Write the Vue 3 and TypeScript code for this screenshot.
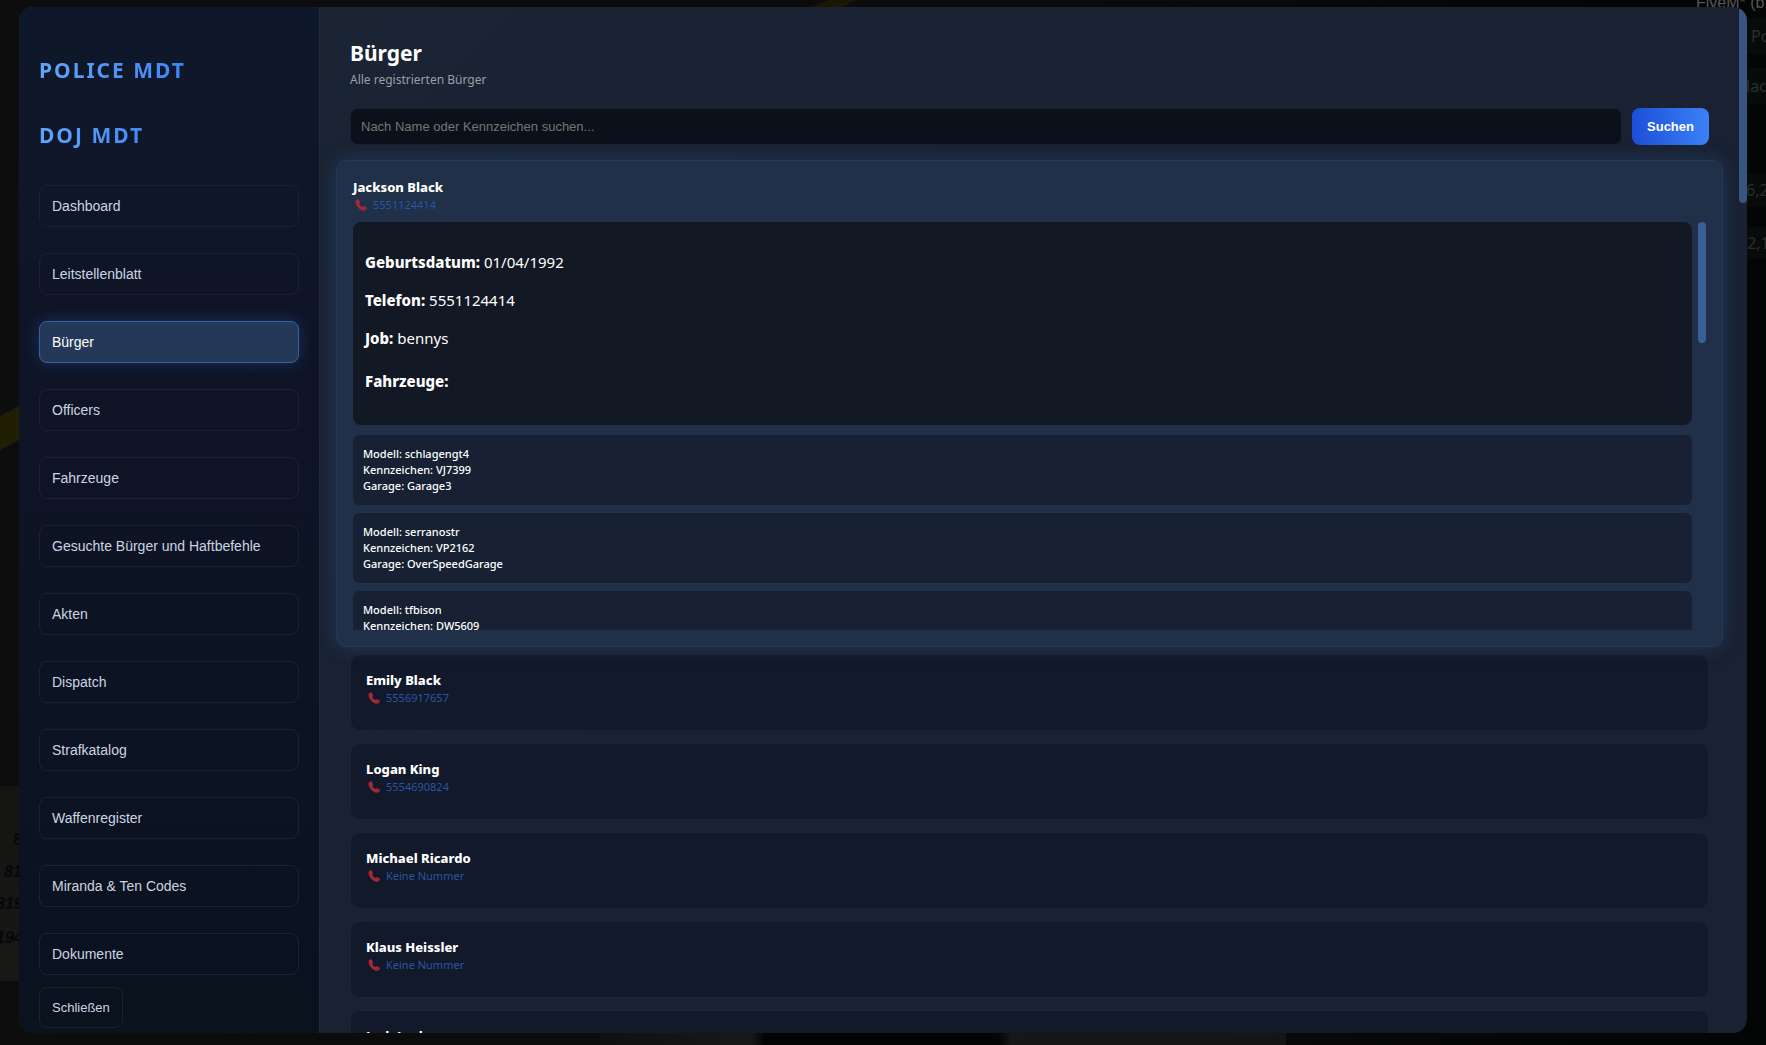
<script setup lang="ts">
import { ref } from 'vue'

interface Vehicle {
  model: string
  plate: string
  garage: string
}

interface Citizen {
  name: string
  phone: string
}

const navItems: string[] = [
  'Dashboard',
  'Leitstellenblatt',
  'Bürger',
  'Officers',
  'Fahrzeuge',
  'Gesuchte Bürger und Haftbefehle',
  'Akten',
  'Dispatch',
  'Strafkatalog',
  'Waffenregister',
  'Miranda & Ten Codes',
  'Dokumente',
]

const current = ref('Bürger')
const query = ref('')

const vehicles: Vehicle[] = [
  { model: 'schlagengt4', plate: 'VJ7399', garage: 'Garage3' },
  { model: 'serranostr', plate: 'VP2162', garage: 'OverSpeedGarage' },
  { model: 'tfbison', plate: 'DW5609', garage: 'Garage3' },
]

const citizens: Citizen[] = [
  { name: 'Emily Black', phone: '5556917657' },
  { name: 'Logan King', phone: '5554690824' },
  { name: 'Michael Ricardo', phone: 'Keine Nummer' },
  { name: 'Klaus Heissler', phone: 'Keine Nummer' },
  { name: 'Jack Leslor', phone: 'Keine Nummer' },
]

const handset =
  'M1.2 1.1C2.2 0 3.3 0 3.9 1L4.9 2.9C5.2 3.6 5 4.2 4.2 4.8C4.7 6.400 5.900 7.500 7.400 8C8 7.200 8.600 7 9.300 7.300L11.300 8.300C12.300 8.900 12.200 9.900 11.100 11C9.600 12.400 6.300 11.700 3.500 8.900C.6 6-.2 2.600 1.200 1.100Z'
</script>

<template>
  <div class="page">
    <svg width="0" height="0" class="defs" aria-hidden="true">
      <linearGradient id="handset-fill" x1="0" x2="1">
        <stop offset="0" stop-color="#a8263a" />
        <stop offset="0.6" stop-color="#a62a30" />
        <stop offset="1" stop-color="#8c2350" />
      </linearGradient>
    </svg>
    <div class="world" aria-hidden="true">
      <svg class="stripe-left" viewBox="0 0 19 44"><path d="M0 10 19 0V34L0 44Z" fill="#211f03" /></svg>
      <svg class="stripe-top" viewBox="0 0 44 7"><path d="M16 0H44L30 7H0Z" fill="#1a1804" /></svg>
      <div class="notes">
        <span class="n1">8</span>
        <span class="n2">81</span>
        <span class="n3">819</span>
        <span class="n4">194</span>
      </div>
      <div class="floor"></div>
      <div class="hud">
        <span class="hud-title">FiveM* (b</span>
        <span class="hud-row r1">Po</span>
        <span class="hud-row r2">lac</span>
        <span class="hud-row r3">6,2</span>
        <span class="hud-row r4">32,1</span>
      </div>
    </div>

    <div class="panel">
      <aside class="sidebar">
        <h2 class="brand">POLICE MDT</h2>
        <h2 class="brand">DOJ MDT</h2>
        <nav class="nav">
          <button
            v-for="item in navItems"
            :key="item"
            type="button"
            class="nav-btn"
            :class="{ active: item === current }"
            @click="current = item"
          >
            {{ item }}
          </button>
        </nav>
        <button type="button" class="nav-btn close">Schließen</button>
      </aside>

      <main class="main">
        <h1>Bürger</h1>
        <p class="subtitle">Alle registrierten Bürger</p>

        <form class="search" @submit.prevent>
          <input v-model="query" type="text" aria-label="Suche" placeholder="Nach Name oder Kennzeichen suchen..." />
          <button type="submit">Suchen</button>
        </form>

        <article class="card open">
          <h3>Jackson Black</h3>
          <p class="phone">
            <svg viewBox="0 0 12 12"><path :d="handset" /></svg>
            5551124414
          </p>
          <div class="details">
            <div class="details-body">
              <section class="facts">
                <p><strong>Geburtsdatum:</strong> 01/04/1992</p>
                <p><strong>Telefon:</strong> 5551124414</p>
                <p><strong>Job:</strong> bennys</p>
                <h4>Fahrzeuge:</h4>
              </section>
              <section v-for="v in vehicles" :key="v.plate" class="vehicle">
                Modell: {{ v.model }}<br />
                Kennzeichen: {{ v.plate }}<br />
                Garage: {{ v.garage }}
              </section>
            </div>
            <div class="thumb"></div>
          </div>
        </article>

        <article v-for="c in citizens" :key="c.name" class="card">
          <h3>{{ c.name }}</h3>
          <p class="phone">
            <svg viewBox="0 0 12 12"><path :d="handset" /></svg>
            {{ c.phone }}
          </p>
        </article>
      </main>
      <div class="page-thumb"></div>
    </div>
  </div>
</template>

<style>
body {
  background: #060707;
}
</style>

<style scoped>
* {
  box-sizing: border-box;
}

h1,
h2,
h3,
h4,
p {
  margin: 0;
}

.page {
  position: relative;
  height: 100vh;
  padding: 7px 19px 12px;
  overflow: hidden;
  background: linear-gradient(90deg, #0c0d0c, #0b0b0b 60%, #040605 90%);
  color: #fff;
  font-family: 'Noto Sans', 'Open Sans', sans-serif;
}

.defs {
  position: absolute;
}

/* darkened game scene around the tablet */
.world > * {
  position: absolute;
}

.stripe-left {
  left: 0;
  top: 406px;
  width: 19px;
  height: 44px;
}

.stripe-top {
  left: 812px;
  top: 0;
  width: 44px;
  height: 7px;
}

.notes {
  left: 0;
  top: 786px;
  width: 19px;
  height: 195px;
  overflow: hidden;
  background: linear-gradient(#141413, #181817);
  color: #070707;
  font: italic bold 16px/20px 'Liberation Sans', sans-serif;
}

.notes span {
  position: absolute;
}

.n1 {
  left: 13px;
  top: 44px;
}

.n2 {
  left: 4px;
  top: 76px;
}

.n3 {
  left: -4px;
  top: 108px;
}

.n4 {
  left: -4px;
  top: 142px;
}

.floor {
  left: 600px;
  right: 480px;
  bottom: 0;
  height: 12px;
  background: linear-gradient(90deg, #111010, #191919 22%, #040404 24%, #040404 58%, #171717 60%, #161515);
}

.hud {
  right: 0;
  top: 0;
  width: 70px;
  height: 262px;
  overflow: hidden;
  color: #2b2d2c;
  font: 16px/20px 'Noto Sans', sans-serif;
}

.hud-title {
  position: absolute;
  left: 0;
  top: -7px;
  color: #555;
  white-space: nowrap;
  font-family: 'Liberation Sans', sans-serif;
  font-size: 16px;
}

.hud-row {
  position: absolute;
  left: 30px;
  right: 0;
  padding: 8px 0 8px 20px;
  background: #070c0b;
}

.r1 {
  top: 18px;
  padding-left: 25px;
}

.r2 {
  top: 68px;
}

.r3 {
  top: 174px;
  padding-top: 6px;
  padding-bottom: 6px;
}

.r4 {
  top: 227px;
  padding: 6px 0 6px 12px;
}

.panel {
  position: relative;
  display: flex;
  height: 100%;
  overflow: hidden;
  border-radius: 14px;
  background: linear-gradient(135deg, #1b2534, #192132 50%, #192132);
}

.sidebar {
  flex: none;
  display: flex;
  flex-direction: column;
  width: 301px;
  padding: 46px 20px 0;
  border-right: 1px solid #1b2a42;
  background: linear-gradient(#0f182a, #0f1527 30%, #0b1220 85%, #0a121e);
}

.brand {
  align-self: flex-start;
  margin-bottom: 30px;
  padding-right: 60px;
  background: linear-gradient(90deg, #60a5fa, #3b82f6 80%);
  background-clip: text;
  color: transparent;
  font-size: 21px;
  font-weight: 700;
  line-height: 35px;
  letter-spacing: 2px;
}

.nav {
  display: flex;
  flex-direction: column;
  gap: 26px;
  margin-top: 2px;
}

.nav-btn {
  height: 42px;
  padding: 0 12px;
  border: 1px solid #1a2131;
  border-radius: 8px;
  background: transparent;
  color: #cbd5e1;
  font: 14px 'Liberation Sans', Arial, sans-serif;
  text-align: left;
}

.nav-btn.active {
  border-color: #3563a0;
  background: #243959;
  box-shadow: 0 0 15px rgba(59, 130, 246, 0.25);
  color: #fff;
}

.close {
  flex: none;
  align-self: flex-start;
  height: 41px;
  margin-top: 12px;
  font-size: 13px;
}

.main {
  flex: 1;
  min-width: 0;
  padding: 30px 30px 0;
  overflow: hidden;
}

h1 {
  font-size: 21px;
  font-weight: 700;
  line-height: 32px;
}

.subtitle {
  color: #9a9fa8;
  font-size: 12px;
  line-height: 22px;
}

.search {
  display: flex;
  align-items: center;
  gap: 10px;
  margin: 17px 0 15px;
}

.search input {
  flex: 1;
  min-width: 0;
  height: 37px;
  padding: 0 10px;
  border: 1px solid #19202f;
  border-radius: 8px;
  background: #0b111b;
  color: #fff;
  font: 13px 'Liberation Sans', Arial, sans-serif;
}

.search input::placeholder {
  color: #757575;
}

.search button {
  width: 77px;
  height: 37px;
  padding: 0;
  border: 0;
  border-radius: 8px;
  background: linear-gradient(90deg, #1d4ed8, #3b82f6);
  color: #fff;
  font: bold 13px 'Liberation Sans', Arial, sans-serif;
}

.card {
  height: 77px;
  margin-bottom: 12px;
  padding: 16px 15px;
  border: 1px solid #1b2435;
  border-radius: 10px;
  background: #11192a;
}

.card h3 {
  font-size: 13px;
  font-weight: 800;
  line-height: 18px;
}

.phone {
  display: flex;
  align-items: center;
  gap: 6px;
  padding-left: 2px;
  color: #2a56a3;
  font-size: 11px;
  line-height: 17px;
}

.phone svg {
  width: 12px;
  height: 12px;
  fill: url(#handset-fill);
}

.card.open {
  position: relative;
  height: 487px;
  margin: 0 -14px 7px;
  padding: 17px 15px 17px 16px;
  border-color: #283751;
  background: #203048;
  box-shadow: 0 0 20px rgba(50, 110, 190, 0.28);
}

.details {
  display: flex;
  gap: 6px;
  height: 408px;
  margin-top: 9px;
  overflow: hidden;
}

.details-body {
  flex: 1;
  min-width: 0;
}

.facts {
  height: 203px;
  padding: 28px 12px 0;
  border-radius: 8px;
  background: #121824;
  font-size: 15px;
  line-height: 24px;
}

.facts p {
  margin-bottom: 14px;
}

.facts strong,
.facts h4 {
  font-weight: 800;
}

.facts h4 {
  margin-top: 19px;
  font-size: 15px;
}

.vehicle {
  height: 70px;
  margin-top: 8px;
  padding: 11px 10px;
  border-radius: 6px;
  background: #172133;
  font-size: 11px;
  font-weight: 500;
  line-height: 16px;
}

.facts + .vehicle {
  margin-top: 10px;
}

.thumb {
  flex: none;
  width: 8px;
  height: 121px;
  margin-right: 1px;
  border-radius: 4px;
  background: #3a5f94;
}

.page-thumb {
  flex: none;
  width: 8px;
  height: 196px;
  border-radius: 4px;
  background: #365681;
}
</style>
